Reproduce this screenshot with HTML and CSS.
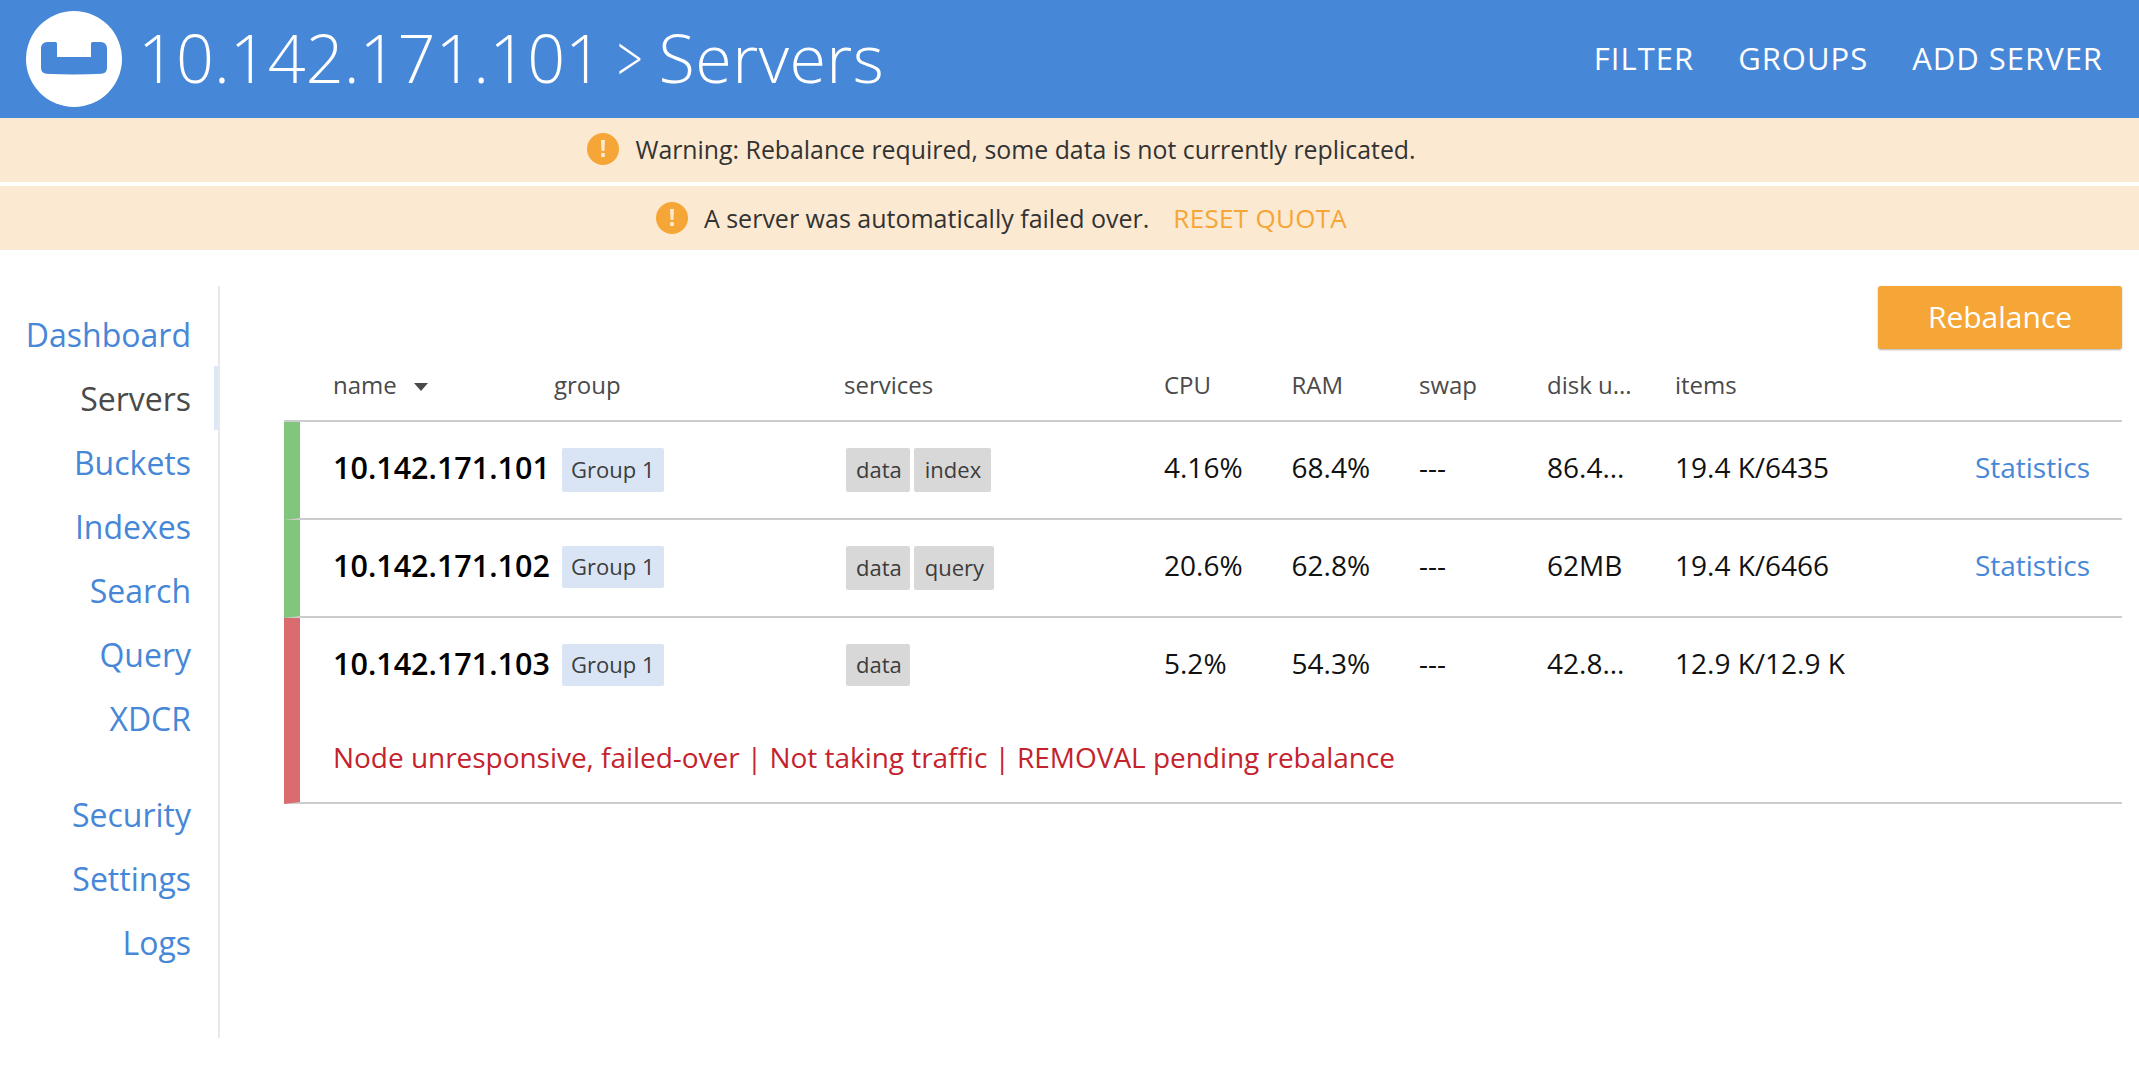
FILE: index.html
```html
<!DOCTYPE html>
<html lang="en">
<head>
<meta charset="utf-8">
<title>Servers</title>
<link rel="stylesheet" href="styles.css">
</head>
<body>
<header class="topbar">
  <svg class="logo" viewBox="0 0 96 96" aria-hidden="true">
    <circle cx="48" cy="48" r="48" fill="#fff"/>
    <path d="M15 37a6 6 0 0 1 6-6h8.500a1.500 1.500 0 0 1 1.500 1.500V46h34V32.500a1.500 1.500 0 0 1 1.500-1.500h8.500a6 6 0 0 1 6 6V57a6 6 0 0 1-5 5.800q-28 1.400-56 0a6 6 0 0 1-5-5.800z" fill="#4787d7"/>
  </svg>
  <h1 class="title">10.142.171.101 <span class="chev">&gt;</span> <span class="crumb">Servers</span></h1>
  <nav class="actions">
    <a>FILTER</a>
    <a>GROUPS</a>
    <a>ADD SERVER</a>
  </nav>
</header>

<div class="banner banner-first">
  <svg class="warn" viewBox="0 0 32 32" aria-hidden="true"><circle cx="16" cy="16" r="16" fill="#f5a636"/><path d="M14 7h4l-.6 11h-2.800z" fill="#fce9d0"/><rect x="14.200" y="20" width="3.600" height="4" fill="#fce9d0"/></svg>
  <span>Warning: Rebalance required, some data is not currently replicated.</span>
</div>
<div class="banner banner-second">
  <svg class="warn" viewBox="0 0 32 32" aria-hidden="true"><circle cx="16" cy="16" r="16" fill="#f5a636"/><path d="M14 7h4l-.6 11h-2.800z" fill="#fce9d0"/><rect x="14.200" y="20" width="3.600" height="4" fill="#fce9d0"/></svg>
  <span>A server was automatically failed over.</span>
  <a class="reset">RESET QUOTA</a>
</div>

<div class="layout">
  <aside class="sidebar">
    <a class="item">Dashboard</a>
    <a class="item active">Servers</a>
    <a class="item">Buckets</a>
    <a class="item">Indexes</a>
    <a class="item">Search</a>
    <a class="item">Query</a>
    <a class="item group-end">XDCR</a>
    <a class="item">Security</a>
    <a class="item">Settings</a>
    <a class="item">Logs</a>
  </aside>

  <main class="content">
    <div class="toolbar"><button class="rebalance">Rebalance</button></div>

    <div class="cols head">
      <div>name <span class="caret"></span></div>
      <div>group</div>
      <div>services</div>
      <div>CPU</div>
      <div>RAM</div>
      <div>swap</div>
      <div>disk u...</div>
      <div>items</div>
    </div>

    <div class="row ok">
      <div class="cols cells">
        <div class="host">10.142.171.101</div>
        <div class="groupcell"><span class="tag tag-group">Group 1</span></div>
        <div class="svc"><span class="tag tag-svc">data</span><span class="tag tag-svc">index</span></div>
        <div>4.16%</div>
        <div>68.4%</div>
        <div>---</div>
        <div>86.4...</div>
        <div>19.4 K/6435</div>
        <a class="stats">Statistics</a>
      </div>
    </div>

    <div class="row ok">
      <div class="cols cells">
        <div class="host">10.142.171.102</div>
        <div class="groupcell"><span class="tag tag-group tag-short">Group 1</span></div>
        <div class="svc"><span class="tag tag-svc">data</span><span class="tag tag-svc">query</span></div>
        <div>20.6%</div>
        <div>62.8%</div>
        <div>---</div>
        <div>62MB</div>
        <div>19.4 K/6466</div>
        <a class="stats">Statistics</a>
      </div>
    </div>

    <div class="row bad">
      <div class="cols cells">
        <div class="host">10.142.171.103</div>
        <div class="groupcell"><span class="tag tag-group tag-short">Group 1</span></div>
        <div class="svc"><span class="tag tag-svc tag-short">data</span></div>
        <div>5.2%</div>
        <div>54.3%</div>
        <div>---</div>
        <div>42.8...</div>
        <div>12.9 K/12.9 K</div>
      </div>
      <p class="message">Node unresponsive, failed-over | Not taking traffic | REMOVAL pending rebalance</p>
    </div>
  </main>
</div>
</body>
</html>
```

FILE: styles.css
```css
* { box-sizing: border-box; }
html, body { margin: 0; padding: 0; }
body {
  font-family: "Open Sans", "Noto Sans", sans-serif;
  background: #fff;
  color: #333;
  height: 1071px;
  overflow: hidden;
}

.topbar {
  height: 118px;
  background: #4787d7;
  color: #fff;
  display: flex;
  align-items: center;
  padding: 0 36px 0 26px;
}
.logo { width: 96px; height: 96px; flex: none; }
.title {
  margin: 0 0 0 16px;
  padding-bottom: 4px;
  font-size: 66.500px;
  font-weight: 300;
  line-height: 1;
  flex: 1;
}
.chev { display: inline-block; transform: scaleX(.68); margin: 0 -8px 0 -9px; }
.crumb { letter-spacing: .4px; }
.actions { display: flex; gap: 44px; font-size: 31px; letter-spacing: 1px; padding-bottom: 2px; }

.banner {
  height: 64px;
  background: #fce9d2;
  display: flex;
  align-items: center;
  justify-content: center;
  padding-right: 136px;
  font-size: 24.850px;
  font-weight: 500;
  color: #333;
}
.banner-first { padding-bottom: 3px; }
.banner-second { margin-top: 4px; font-size: 25px; }
.warn { width: 32px; height: 32px; margin-right: 16px; flex: none; }
.reset { color: #f5a636; margin-left: 24px; font-size: 26px; font-weight: 400; letter-spacing: .3px; }

.layout { display: flex; align-items: flex-start; margin-top: 36px; }

.sidebar {
  width: 220px;
  height: 752px;
  flex: none;
  border-right: 2px solid #e8e8e8;
  padding-top: 16px;
  display: flex;
  flex-direction: column;
}
.item {
  height: 64px;
  line-height: 65px;
  text-align: right;
  font-size: 32px;
  padding-right: 23px;
  border-right: 4px solid transparent;
  color: #4787d7;
}
.item.active { color: #4a4a4a; border-right-color: #dce8f7; }
.group-end { margin-bottom: 32px; }

.content { flex: 1; padding: 0 17px 0 64px; }
.toolbar { display: flex; justify-content: flex-end; }
.rebalance {
  width: 244px;
  height: 63px;
  border: 0;
  border-radius: 3px;
  background: #f5a636;
  color: #fff;
  font-family: inherit;
  font-size: 30px;
  padding: 0 0 3px;
  box-shadow: 0 1px 2px rgba(0,0,0,.3);
}

.cols {
  display: grid;
  grid-template-columns: 221px 290px 320px 127.500px 127.500px 128px 128px 1fr auto;
  align-items: center;
}
.head {
  height: 73px;
  border-bottom: 2px solid #ccc;
  font-size: 24px;
  color: #4a4a4a;
  padding-left: 49px;
}
.caret {
  display: inline-block;
  width: 0;
  height: 0;
  margin-left: 11px;
  vertical-align: 3px;
  border-left: 7px solid transparent;
  border-right: 7px solid transparent;
  border-top: 8px solid #4a4a4a;
}

.row { border-left: 16px solid; border-bottom: 2px solid #ccc; }
.row.ok { border-left-color: #82c57c; }
.row.bad { border-left-color: #da6c70; }
.cells {
  height: 96px;
  padding-left: 33px;
  padding-bottom: 6px;
  font-size: 28px;
  color: #111;
}
.host { font-size: 30.500px; font-weight: 600; color: #000; white-space: nowrap; }
.groupcell { align-self: start; padding: 26px 0 0 8px; display: flex; }
.svc { align-self: start; display: flex; gap: 4px; padding: 26px 0 0 2px; }
.tag {
  display: inline-flex;
  align-items: center;
  height: 44px;
  padding: 0 8px 2px 10px;
  border-radius: 2px;
  font-size: 22px;
  color: #3c3c3c;
}
.tag-short { height: 42px; }
.tag-group { background: #d9e5f5; padding: 0 10px 2px 9px; }
.tag-svc { background: #d8d8d8; }
.tag-svc + .tag-svc { padding: 0 10px 2px 11px; }
.stats { color: #4787d7; padding-right: 32px; }
.message {
  margin: 0;
  padding: 23px 0 25px 33px;
  line-height: 40px;
  font-size: 28px;
  letter-spacing: -.035px;
  color: #c4232d;
}
```
